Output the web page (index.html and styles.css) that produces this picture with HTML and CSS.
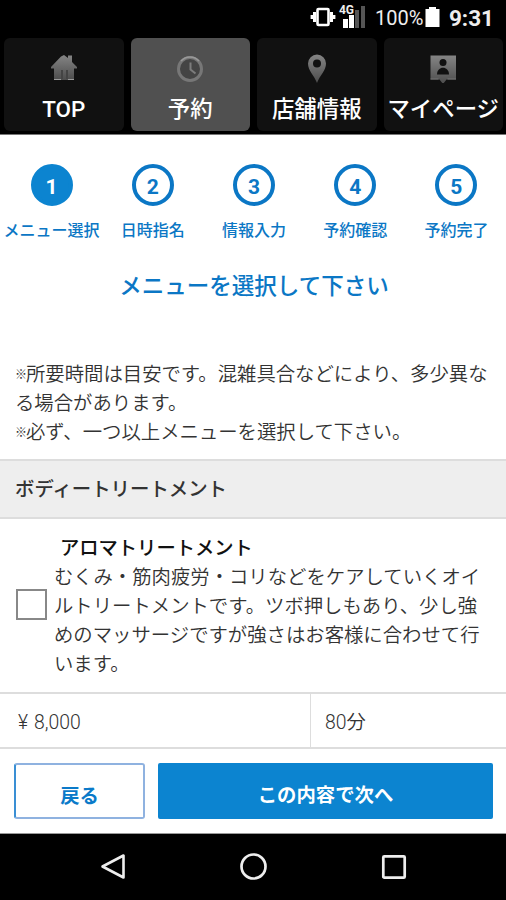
FILE: index.html
```html
<!DOCTYPE html>
<html lang="ja">

<head>
    <meta charset="utf-8">
    <title>予約</title>
    <link rel="stylesheet" href="styles.css">
</head>

<body>
    <div class="status">
        <svg class="vibrate" width="26" height="20" viewBox="0 0 26 20">
            <rect x="7.500" y="2" width="11" height="16" rx="1" fill="none" stroke="#fff" stroke-width="2.600"/>
            <path d="M4.500 5v10M21.500 5v10" stroke="#fff" stroke-width="3"/>
            <path d="M1.800 8v4M24.200 8v4" stroke="#fff" stroke-width="2.400"/>
        </svg>
        <div class="signal">
            <svg width="26" height="24" viewBox="0 0 26 24">
                <path d="M4 14h5v9H4zM10 10h5v13h-5z" fill="#fff"/>
                <path d="M16 5h4v18h-4zM22 1h4v22h-4z" fill="#555"/>
            </svg>
            <span class="net">4G</span>
        </div>
        <span class="percent">100%</span>
        <svg class="battery" width="15" height="20" viewBox="0 0 15 20">
            <path d="M4 0h7v2h3.5v18H.5V2H4z" fill="#fff"/>
        </svg>
        <span class="clock">9:31</span>
    </div>
    <div class="tabs">
        <div class="tab">
            <svg width="28" height="30" viewBox="0 0 28 30">
                <defs>
                    <linearGradient id="metal" x1="0" y1="0" x2="0" y2="1">
                        <stop offset="0" stop-color="#858585"/>
                        <stop offset="1" stop-color="#4c4c4c"/>
                    </linearGradient>
                </defs>
                <path d="M1 14 11 3.5l3-1.5 4 3V2.500h4V9l5 5v1.500h-3V27H4V15.500H1z" fill="url(#metal)"/>
                <path d="M11 17h2v9h-2zM16 17h2v9h-2z" fill="#444"/>
                <path d="M4 26.500h7M18 26.500h6" stroke="#999"/>
            </svg>
            <span>TOP</span>
        </div>
        <div class="tab active">
            <svg width="28" height="30" viewBox="0 0 28 30">
                <circle cx="14" cy="16" r="11.500" fill="#444" stroke="#777" stroke-width="3"/>
                <path d="M5 8a12 12 0 0 1 18 0" fill="none" stroke="#999" stroke-width="1.500"/>
                <path d="M14.500 9.500v7l5 4" fill="none" stroke="#7c7c7c" stroke-width="2"/>
            </svg>
            <span>予約</span>
        </div>
        <div class="tab">
            <svg width="28" height="30" viewBox="0 0 28 30">
                <path d="M14 1.500a9 9 0 0 0-9 9c0 7 6 11.500 9 19.500 3-8 9-12.500 9-19.500a9 9 0 0 0-9-9z" fill="url(#metal)"/>
                <circle cx="14" cy="10.500" r="4" fill="#111"/>
            </svg>
            <span>店舗情報</span>
        </div>
        <div class="tab">
            <svg width="28" height="30" viewBox="0 0 28 30">
                <path d="M1.500 2.500h25.500v24h-9.500L14 31l-3.500-4.500h-9z" fill="url(#metal)"/>
                <circle cx="14" cy="9.500" r="3.500" fill="#111"/>
                <path d="M8 21.500c0-9 12-9 12 0z" fill="#111"/>
                <path d="M1.500 26h8M18.500 26H27" stroke="#777"/>
            </svg>
            <span>マイページ</span>
        </div>
    </div>
    <div class="steps">
        <div class="step current"><b>1</b><span>メニュー選択</span></div>
        <div class="step"><b>2</b><span>日時指名</span></div>
        <div class="step"><b>3</b><span>情報入力</span></div>
        <div class="step"><b>4</b><span>予約確認</span></div>
        <div class="step"><b>5</b><span>予約完了</span></div>
    </div>
    <h1>メニューを選択して下さい</h1>
    <p class="notes">
        <span class="mark">※</span>所要時間は目安です。混雑具合などにより、多少異な<br>る場合があります。<br>
        <span class="mark">※</span>必ず、一つ以上メニューを選択して下さい。
    </p>
    <h2>ボディートリートメント</h2>
    <div class="item">
        <div class="checkbox"></div>
        <div class="detail">
            <h3>アロマトリートメント</h3>
            <p>むくみ・筋肉疲労・コリなどをケアしていくオイ<br>ルトリートメントです。ツボ押しもあり、少し強<br>めのマッサージですが強さはお客様に合わせて行<br>います。</p>
        </div>
    </div>
    <div class="price">
        <div class="yen"><span class="mark-yen">¥</span>8,000</div>
        <div class="time">80分</div>
    </div>
    <div class="buttons">
        <div class="back">戻る</div>
        <div class="next">この内容で次へ</div>
    </div>
    <div class="navbar">
        <svg width="28" height="30" viewBox="0 0 28 30">
            <path d="M23.500 3.500v22L2.500 14.500z" fill="none" stroke="#eee" stroke-width="2.600" stroke-linejoin="round"/>
        </svg>
        <svg width="28" height="30" viewBox="0 0 28 30">
            <circle cx="13.500" cy="14.500" r="12" fill="none" stroke="#eee" stroke-width="2.700"/>
        </svg>
        <svg width="28" height="30" viewBox="0 0 28 30">
            <rect x="3.300" y="4.300" width="21.400" height="21.400" rx="1" fill="none" stroke="#eee" stroke-width="2.700"/>
        </svg>
    </div>
</body>

</html>
```
FILE: styles.css
```css
body {
    margin: 0;
    width: 506px;
    height: 900px;
    overflow: hidden;
    background: #fff;
    color: #333;
    font-family: Roboto, "Noto Sans CJK JP", sans-serif;
    font-size: 19.36px;
    font-weight: 350;
    line-height: 29px;
}
h1, h2, h3, p {
    margin: 0;
}
.status {
    display: flex;
    align-items: center;
    justify-content: flex-end;
    height: 38px;
    padding: 0 12px 2px 0;
    background: #000;
    color: #eee;
    box-sizing: border-box;
}
.vibrate {
    margin: 0 3px 2px 0;
}
.signal {
    position: relative;
    height: 24px;
    margin: 0 10px 2px 0;
}
.net {
    position: absolute;
    left: 0;
    top: 0;
    font-size: 12px;
    font-weight: bold;
    line-height: 11px;
}
.percent {
    width: 47px;
    font-size: 20px;
    font-weight: 400;
    white-space: nowrap;
}
.battery {
    margin: 0 9px 2px 3px;
}
.clock {
    font-size: 22.5px;
    font-weight: bold;
}
.tabs {
    display: grid;
    grid-template-columns: repeat(4, 1fr);
    gap: 7px;
    height: 97px;
    padding: 0 3px 3px 4px;
    background: #000;
    border-bottom: 1px solid #777;
    box-sizing: border-box;
}
.tab {
    display: flex;
    flex-direction: column;
    align-items: center;
    padding-top: 15px;
    border-radius: 6px;
    background: #111;
    color: #fff;
    font-size: 22.4px;
    font-weight: 500;
    line-height: 32px;
    white-space: nowrap;
    box-sizing: border-box;
}
.tab svg {
    flex: none;
    margin-bottom: 10px;
}
.active {
    background: #505050;
}
.steps {
    display: grid;
    grid-template-columns: repeat(5, 1fr);
    padding: 29px 0 0 1px;
    margin-right: -1px;
    color: #0b77c5;
}
.step {
    display: flex;
    flex-direction: column;
    align-items: center;
    font-size: 16px;
    font-weight: 500;
    line-height: 24px;
    white-space: nowrap;
}
.step b {
    width: 42px;
    height: 42px;
    margin-bottom: 13px;
    border: 4px solid #0b77c5;
    border-radius: 50%;
    box-sizing: border-box;
    font-size: 21px;
    line-height: 39px;
    text-align: center;
}
.current b {
    background: #0c84d0;
    border-color: #0c84d0;
    color: #fff;
}
h1 {
    margin-top: 26px;
    padding-left: 2px;
    color: #0b77c5;
    font-size: 22.5px;
    font-weight: 500;
    line-height: 34px;
    text-align: center;
}
.notes {
    height: 99px;
    padding: 57px 0 0 15px;
    white-space: nowrap;
}
.mark {
    display: inline-block;
    width: 11px;
    font-size: 12px;
    font-weight: bold;
    line-height: 12px;
    vertical-align: 2px;
}
h2 {
    height: 60px;
    padding-left: 15px;
    border-top: 2px solid #ddd;
    border-bottom: 2px solid #ddd;
    background: #eee;
    box-sizing: border-box;
    font-size: 19.4px;
    font-weight: 500;
    line-height: 58px;
}
.item {
    display: flex;
    align-items: center;
    height: 173px;
    padding-left: 16px;
}
.checkbox {
    flex: none;
    width: 31px;
    height: 31px;
    margin: 0 7px 2px 0;
    border: 2px solid #888;
    box-sizing: border-box;
}
.detail {
    padding-top: 2px;
    white-space: nowrap;
}
h3 {
    padding-left: 6px;
    color: #111;
    font-size: 19.3px;
    font-weight: 500;
}
.price {
    display: flex;
    height: 57px;
    border-top: 2px solid #ddd;
    border-bottom: 2px solid #ddd;
    box-sizing: border-box;
    line-height: 57px;
}
.yen {
    width: 311px;
    padding-left: 18px;
    border-right: 1px solid #ddd;
    box-sizing: border-box;
}
.mark-yen {
    display: inline-block;
    width: 16px;
}
.time {
    padding-left: 14px;
}
.buttons {
    display: flex;
    gap: 13px;
    height: 85px;
    padding: 14px 13px 14px 14px;
    border-bottom: 1px solid #999;
    box-sizing: border-box;
    line-height: 66px;
    text-align: center;
}
.back {
    width: 131px;
    border: 2px solid #8fb2e0;
    border-left-color: #3a8fd4;
    border-radius: 3px;
    box-sizing: border-box;
    color: #0b7ac9;
    font-weight: bold;
    line-height: 63px;
}
.next {
    flex: 1;
    border-radius: 2px;
    background: #0c84d0;
    color: #fff;
    font-weight: bold;
}
.navbar {
    display: flex;
    justify-content: center;
    gap: 112px;
    height: 66px;
    padding: 18px 0 0 2px;
    background: #000;
    box-sizing: border-box;
}
```
